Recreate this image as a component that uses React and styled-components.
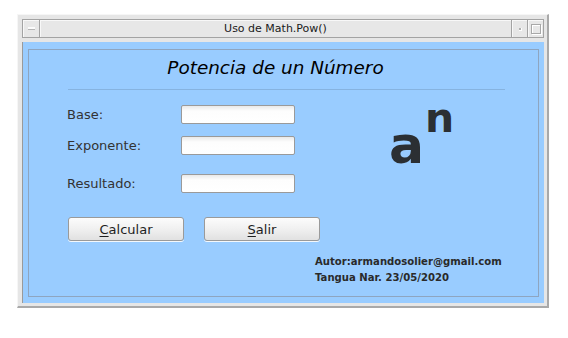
import React from "react";
import styled, { createGlobalStyle } from "styled-components";

const GlobalStyle = createGlobalStyle`
  body {
    margin: 0;
    background: #ffffff;
    font-family: "DejaVu Sans", "Liberation Sans", sans-serif;
  }
`;

const Window = styled.div`
  box-sizing: border-box;
  width: 532px;
  height: 294px;
  margin: 14px 0 0 17px;
  padding: 4px 3px 3px 4px;
  background: #e6e6e6;
  border-top: 1px solid #f6f6f6;
  border-left: 1px solid #f6f6f6;
  border-right: 2px solid #a9a9a9;
  border-bottom: 2px solid #a9a9a9;
  display: flex;
  flex-direction: column;
`;

const TitleBar = styled.div`
  box-sizing: border-box;
  height: 19px;
  display: flex;
  border: 1px solid #a3a3a3;
  background: #e7e7e7;
`;

const BarButton = styled.div`
  box-sizing: border-box;
  width: ${(p) => p.$w}px;
  display: flex;
  align-items: center;
  justify-content: center;
  border-left: ${(p) => (p.$sepLeft ? "1px solid #a3a3a3" : "none")};
  border-right: ${(p) => (p.$sepRight ? "1px solid #a3a3a3" : "none")};
  box-shadow: inset 1px 1px 0 #f8f8f8;
`;

const Dash = styled.div`
  width: 7px;
  height: 2px;
  background: #fbfbfb;
  border-bottom: 1px solid #b5b5b5;
`;

const Dot = styled.div`
  width: 2px;
  height: 2px;
  margin: 2px 0 0 2px;
  background: #b0b0b0;
  border-right: 1px solid #fff;
  border-bottom: 1px solid #fff;
`;

const Square = styled.div`
  width: 8px;
  height: 8px;
  border: 1px solid #a8a8a8;
  box-shadow: 1px 1px 0 #fff, inset 1px 1px 0 #fff;
`;

const WindowTitle = styled.div`
  flex: 1;
  text-align: center;
  font-size: 11px;
  line-height: 17px;
  color: #1a1a1a;
  box-shadow: inset 1px 1px 0 #f8f8f8;
`;

const Content = styled.div`
  margin-top: 4px;
  flex: 1;
  display: flex;
  background: #99ccff;
  border-left: 1px solid #9a9a9a;
`;

const Panel = styled.div`
  flex: 1;
  margin: 7px 5px 6px 5px;
  border: 1px solid #8ea5c0;
  display: flex;
  flex-direction: column;
`;

const Heading = styled.div`
  margin-top: 7px;
  padding-right: 16px;
  text-align: center;
  font-size: 18.4px;
  font-style: italic;
  line-height: 22px;
  color: #000;
`;

const Rule = styled.div`
  height: 1px;
  margin: 10px 33px 0 39px;
  background: #86b3e0;
`;

const FormRow = styled.div`
  display: flex;
  align-items: flex-start;
`;

const Fields = styled.div`
  padding: 15px 0 0 38px;
  display: flex;
  flex-direction: column;
`;

const FieldRow = styled.div`
  display: flex;
  align-items: center;
  margin-top: ${(p) => p.$gap || 0}px;
`;

const Label = styled.span`
  width: 114px;
  font-size: 13px;
  color: #333333;
`;

const TextField = styled.div`
  box-sizing: border-box;
  width: 114px;
  height: 19px;
  border: 1px solid #9a9a9a;
  border-radius: 2px;
  background: linear-gradient(to bottom, #e9e9e9 0, #fdfdfd 5px, #ffffff 100%);
`;

const Power = styled.div`
  margin: 8px 0 0 94px;
  display: flex;
  align-items: flex-start;
  font-family: "DejaVu Sans", sans-serif;
  font-weight: bold;
  color: #2b2f33;
`;

const Base = styled.span`
  font-size: 52px;
  line-height: 52px;
  margin-top: 21px;
`;

const Exponent = styled.span`
  font-size: 41px;
  line-height: 40px;
  margin-left: 1px;
`;

const ButtonRow = styled.div`
  display: flex;
  gap: 20px;
  margin: 24px 0 0 39px;
`;

const Button = styled.div`
  box-sizing: border-box;
  width: 116px;
  height: 24px;
  display: flex;
  align-items: center;
  justify-content: center;
  border: 1px solid #9a9a9a;
  border-radius: 3px;
  background: linear-gradient(to bottom, #fcfcfc 0%, #f0f0f0 50%, #e1e1e1 100%);
  box-shadow: 0 1px 0 #f4f8fc;
  font-size: 13px;
  color: #1e1e1e;

  u {
    text-underline-offset: 2px;
  }
`;

const Credits = styled.div`
  margin: 13px 0 0 286px;
  font-size: 10.1px;
  font-weight: bold;
  line-height: 16px;
  color: #2a2a2a;
`;

export default function App() {
  return (
    <>
      <GlobalStyle />
      <Window>
        <TitleBar>
          <BarButton $w={17} $sepRight>
            <Dash />
          </BarButton>
          <WindowTitle>Uso de Math.Pow()</WindowTitle>
          <BarButton $w={17} $sepLeft $sepRight>
            <Dot />
          </BarButton>
          <BarButton $w={15}>
            <Square />
          </BarButton>
        </TitleBar>
        <Content>
          <Panel>
            <Heading>Potencia de un Número</Heading>
            <Rule />
            <FormRow>
              <Fields>
                <FieldRow>
                  <Label>Base:</Label>
                  <TextField />
                </FieldRow>
                <FieldRow $gap={12}>
                  <Label>Exponente:</Label>
                  <TextField />
                </FieldRow>
                <FieldRow $gap={19}>
                  <Label>Resultado:</Label>
                  <TextField />
                </FieldRow>
              </Fields>
              <Power>
                <Base>a</Base>
                <Exponent>n</Exponent>
              </Power>
            </FormRow>
            <ButtonRow>
              <Button>
                <span>
                  <u>C</u>alcular
                </span>
              </Button>
              <Button>
                <span>
                  <u>S</u>alir
                </span>
              </Button>
            </ButtonRow>
            <Credits>
              <div>Autor:armandosolier@gmail.com</div>
              <div>Tangua Nar. 23/05/2020</div>
            </Credits>
          </Panel>
        </Content>
      </Window>
    </>
  );
}
